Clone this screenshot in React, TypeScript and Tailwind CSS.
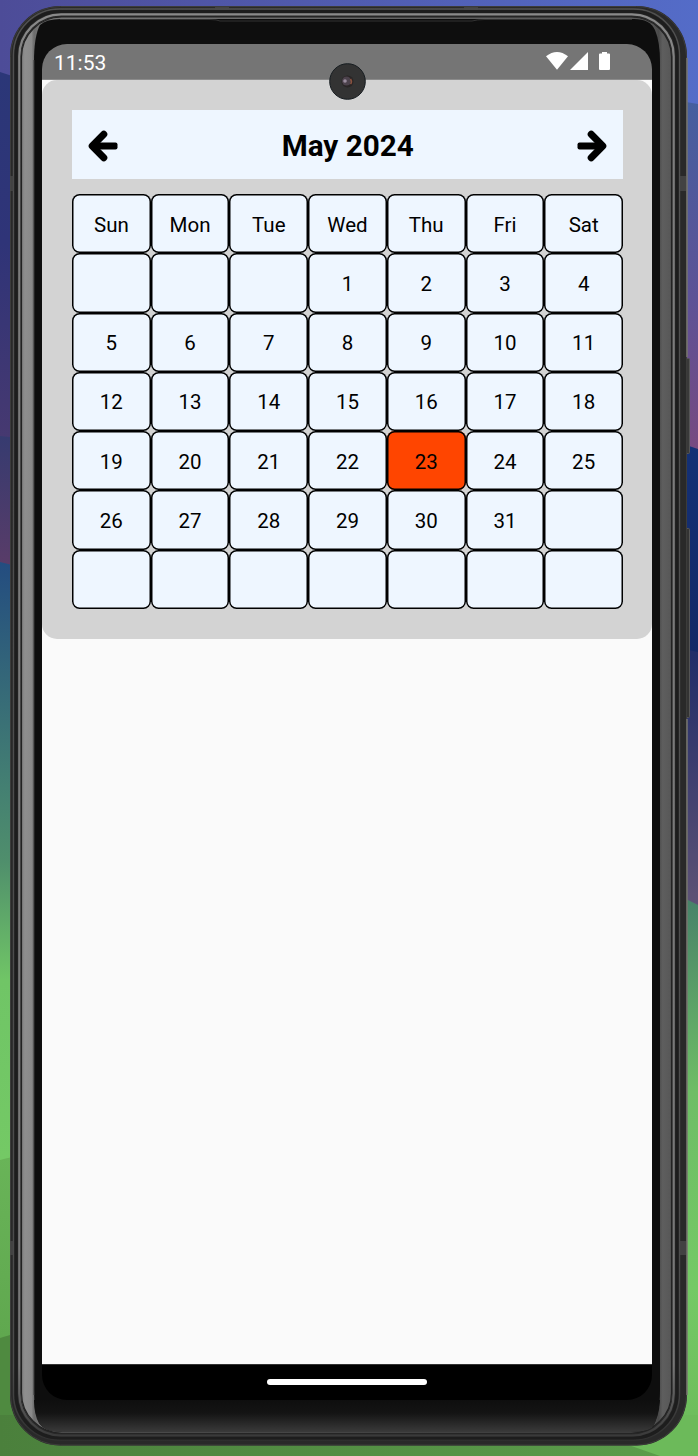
import React from "react";

const days = ["Sun", "Mon", "Tue", "Wed", "Thu", "Fri", "Sat"];
const cells: string[] = [
  ...days,
  "", "", "",
  ...Array.from({ length: 31 }, (_, i) => String(i + 1)),
  ...Array.from({ length: 8 }, () => ""),
];

function Ring({ x0, y0, x1, y1, r, color, w }: { x0: number; y0: number; x1: number; y1: number; r: number; color: string; w: number }) {
  return <rect x={x0} y={y0} width={x1 - x0} height={y1 - y0} rx={r} fill="none" stroke={color} strokeWidth={w} />;
}

function Backdrop() {
  return (
    <svg className="absolute inset-0" width="698" height="1456" viewBox="0 0 698 1456" aria-hidden="true">
      <defs>
        <linearGradient id="skyR" x1="0" y1="0" x2="1" y2="0">
          <stop offset="0" stopColor="#4d4c98" /><stop offset="1" stopColor="#546cc8" />
        </linearGradient>
        <linearGradient id="hillL" x1="0" y1="0" x2="0" y2="1">
          <stop offset="0" stopColor="#2b3778" /><stop offset="0.35" stopColor="#2f3478" /><stop offset="1" stopColor="#553c6c" />
        </linearGradient>
        <linearGradient id="hillL2" x1="0" y1="0" x2="0" y2="1">
          <stop offset="0" stopColor="#363b70" /><stop offset="1" stopColor="#5a3c68" />
        </linearGradient>
        <linearGradient id="tealL" x1="0" y1="560" x2="0" y2="1160" gradientUnits="userSpaceOnUse">
          <stop offset="0" stopColor="#234c80" /><stop offset="0.38" stopColor="#448072" /><stop offset="0.5" stopColor="#4f8e6c" /><stop offset="0.7" stopColor="#70c566" /><stop offset="1" stopColor="#74c965" />
        </linearGradient>
        <linearGradient id="greenL" x1="0" y1="0" x2="0" y2="1">
          <stop offset="0" stopColor="#69b458" /><stop offset="0.6" stopColor="#60a84f" /><stop offset="1" stopColor="#4b813c" />
        </linearGradient>
        <linearGradient id="hillR" x1="0" y1="0" x2="0" y2="1">
          <stop offset="0" stopColor="#455f9f" /><stop offset="0.55" stopColor="#5d5296" /><stop offset="1" stopColor="#79497f" />
        </linearGradient>
        <linearGradient id="navyR" x1="0" y1="0" x2="0" y2="1">
          <stop offset="0" stopColor="#143176" /><stop offset="0.45" stopColor="#142866" /><stop offset="1" stopColor="#655b78" />
        </linearGradient>
        <linearGradient id="greenR" x1="0" y1="896" x2="0" y2="1456" gradientUnits="userSpaceOnUse">
          <stop offset="0" stopColor="#478169" /><stop offset="0.35" stopColor="#6ebd66" /><stop offset="0.7" stopColor="#74c965" /><stop offset="1" stopColor="#6cba5a" />
        </linearGradient>
        <linearGradient id="bottomGreen" x1="0" y1="0" x2="1" y2="0">
          <stop offset="0" stopColor="#4b803c" /><stop offset="0.9" stopColor="#5a9b4a" /><stop offset="1" stopColor="#5c9e4b" />
        </linearGradient>
        <linearGradient id="side" x1="21" y1="0" x2="673" y2="0" gradientUnits="userSpaceOnUse">
          <stop offset="0" stopColor="#7c7c7c" /><stop offset="0.006" stopColor="#8e8e8e" /><stop offset="0.016" stopColor="#8a8a8a" /><stop offset="0.02" stopColor="#6c6c6c" />
          <stop offset="0.03" stopColor="#777" /><stop offset="0.97" stopColor="#555" /><stop offset="0.978" stopColor="#4a4a4a" /><stop offset="0.984" stopColor="#5e5e5e" /><stop offset="1" stopColor="#565656" />
        </linearGradient>
        <linearGradient id="bezelBottom" x1="0" y1="1400" x2="0" y2="1433" gradientUnits="userSpaceOnUse">
          <stop offset="0" stopColor="#0e0e0e" /><stop offset="0.4" stopColor="#141414" /><stop offset="1" stopColor="#3c3c3c" />
        </linearGradient>
        <linearGradient id="fadeRing" x1="0" y1="0" x2="0" y2="1">
          <stop offset="0" stopColor="#8a8a8a" /><stop offset="0.05" stopColor="#7d7d7d" /><stop offset="0.95" stopColor="#777" /><stop offset="1" stopColor="#3a3a3a" />
        </linearGradient>
        <linearGradient id="outerRing" x1="0" y1="0" x2="0" y2="1">
          <stop offset="0" stopColor="#505050" /><stop offset="0.95" stopColor="#4b4b4b" /><stop offset="1" stopColor="#303030" />
        </linearGradient>
      </defs>

      <rect width="698" height="1456" fill="url(#skyR)" />
      <path d="M0 72 L40 85 V560 H0Z" fill="url(#hillL)" />
      <path d="M0 436 L20 438 V570 H0Z" fill="url(#hillL2)" />
      <path d="M0 562 L20 567 V1170 H0Z" fill="url(#tealL)" />
      <path d="M0 1160 Q12 1157 20 1155 H60 V1456 H0Z" fill="url(#greenL)" />
      <path d="M0 1338 L20 1332 H60 V1456 H0Z" fill="#4f8a40" />
      <path d="M680 101 L698 104 V460 H680Z" fill="url(#hillR)" />
      <path d="M680 443 L698 449 V910 H680Z" fill="url(#navyR)" />
      <path d="M680 648 L698 652 V910 H680Z" fill="#4a3d70" opacity="0.25" />
      <path d="M630 1370 L680 896 L698 905 V1456 H630Z" fill="url(#greenR)" />
      <path d="M0 1415 H698 V1456 H0Z" fill="url(#bottomGreen)" />
      <path d="M620 1415 H698 V1456 H660 L620 1442Z" fill="#6cba5a" />

      <rect x="683" y="358.500" width="6.500" height="95" rx="1" fill="#393939" stroke="#555" strokeWidth="1" />
      <rect x="683" y="528.500" width="6.500" height="189" rx="1" fill="#333" stroke="#555" strokeWidth="1" />

      <rect x="10" y="6" width="677" height="1439.500" rx="50" fill="#292929" />
      <Ring x0={10.5} y0={6.5} x1={686.5} y1={1445} r={50} color="#3c3c3b" w={1} />
      <Ring x0={13.5} y0={9} x1={679.5} y1={1440} r={46} color="url(#outerRing)" w={1.4} />
      <Ring x0={16} y0={11.5} x1={677} y1={1438} r={44} color="#1d1d1d" w={3} />
      <Ring x0={19.3} y0={14.3} x1={673.7} y1={1435.5} r={42} color="url(#fadeRing)" w={2.2} />
      <rect x="21" y="17" width="651" height="1416" rx="40" fill="url(#side)" />
      <Ring x0={21.5} y0={17} x1={671.5} y1={1433} r={40} color="#222" w={1.2} />
      <path d="M61 19 H634 Q650 19 655 30 Q660 42 660 62 V1390 Q660 1415 652 1428 Q646 1432 630 1432 H63 Q45 1432 39 1423 Q34 1410 34 1390 V62 Q34 36 40 25 Q46 19 61 19Z" fill="#0e0e0e" />
      <path d="M34 1400 H660 Q659 1418 652 1428 Q646 1432 630 1432 H63 Q45 1432 39 1423 Q34 1415 34 1400Z" fill="url(#bezelBottom)" />
      <path d="M60 19.500 H210 Q217 19.500 220 21 H472 Q477 19.500 485 19.500 H632" stroke="#333" strokeWidth="1" fill="none" />
      <path d="M34 60 V1395" stroke="#3b3b3b" strokeWidth="1" />
      <path d="M10 176 H14 V191 H10Z M10 1241 H14 V1255 H10Z M680 176 H686 V191 H680Z M680 1241 H686 V1255 H680Z M215 7 H229 V10 H215Z M464 7 H478 V10 H464Z" fill="#484848" opacity="0.8" />
      <path d="M687 58 V357 M687 719 V1395" stroke="#77756f" strokeWidth="1.500" />
    </svg>
  );
}

function Arrow({ flip = false }: { flip?: boolean }) {
  return (
    <svg width="30" height="32" viewBox="0 0 30 32" className={flip ? "-scale-x-100" : "-ml-[0.5px]"} aria-hidden="true">
      <path d="M15.800 4.200 L4.200 16 L15.800 27.800" fill="none" stroke="#000" strokeWidth="7" strokeLinecap="round" strokeLinejoin="round" />
      <path d="M4 12.400 H27.500 Q29.500 12.400 29.500 14.400 V17.600 Q29.500 19.600 27.500 19.600 H4Z" />
    </svg>
  );
}

export default function App() {
  return (
    <div className="relative h-[1456px] w-[698px] overflow-hidden pt-[44px] pl-[42px] font-[Roboto,sans-serif] text-black">
      <Backdrop />
      <main className="relative flex h-[1356px] w-[610px] flex-col">
        <header className="flex h-[36px] shrink-0 items-center justify-between rounded-t-[25px] border-b border-[#8b8b8b] bg-[#757575] pr-[42px] pl-[12px] text-white">
          <span className="pt-[4px] text-[21px] leading-none">11:53</span>
          <svg width="64" height="20" viewBox="0 0 64 20" fill="white" className="-mt-px" aria-hidden="true">
            <path d="M0 5.200 Q11 -3.300 22 5.200 L11 18.700Z" />
            <path d="M24 19 L42 1 V19Z" />
            <path d="M56 1 h5 v1.500 h2 q1 0 1 1 V18 q0 1-1 1 h-9 q-1 0-1-1 V3.500 q0-1 1-1 h2Z" />
          </svg>
        </header>
        <div className="flex-1 bg-[#fafafa]">
          <section className="h-[559px] rounded-[15px] bg-[#d3d3d3] px-[30px] pt-[29.5px]">
            <div className="flex h-[69.5px] w-[551px] items-center justify-between bg-[#eef6ff] px-[16px] pt-[3px]">
              <Arrow />
              <h1 className="pl-px text-[29.7px] leading-none font-bold">May 2024</h1>
              <Arrow flip />
            </div>
            <div className="mt-[15px] grid h-[415px] w-[551px] grid-cols-7 grid-rows-7">
              {cells.map((cell, i) => (
                <div
                  key={i}
                  className={`flex items-center justify-center rounded-[7.5px] text-[20.5px] leading-none shadow-[inset_0_0_0_1.5px_black] ${i < 7 ? "pt-[3px]" : "pt-[2px]"} ${cell === "23" ? "bg-[#ff4500]" : "bg-[#eef6ff]"}`}
                >
                  {cell}
                </div>
              ))}
            </div>
          </section>
        </div>
        <footer className="flex h-[36px] shrink-0 items-center justify-center rounded-b-[25px] border-t border-[#333] bg-black pb-[2px]">
          <div className="h-[6px] w-[160px] rounded-full bg-white" />
        </footer>
      </main>
      <svg className="absolute top-[63px] left-[329px]" width="37" height="37" viewBox="0 0 37 37" aria-hidden="true">
        <circle cx="18.500" cy="18.500" r="17.800" fill="#333" stroke="#161c20" />
        <circle cx="18.500" cy="18.500" r="6" fill="#292525" />
        <circle cx="17.500" cy="18" r="4.500" fill="#4c424c" />
        <circle cx="16" cy="18" r="1.800" fill="#9a8d9e" />
        <path d="M21.500 16 q2 3 0 5" stroke="#89523f" strokeWidth="1.500" fill="none" />
      </svg>
    </div>
  );
}
